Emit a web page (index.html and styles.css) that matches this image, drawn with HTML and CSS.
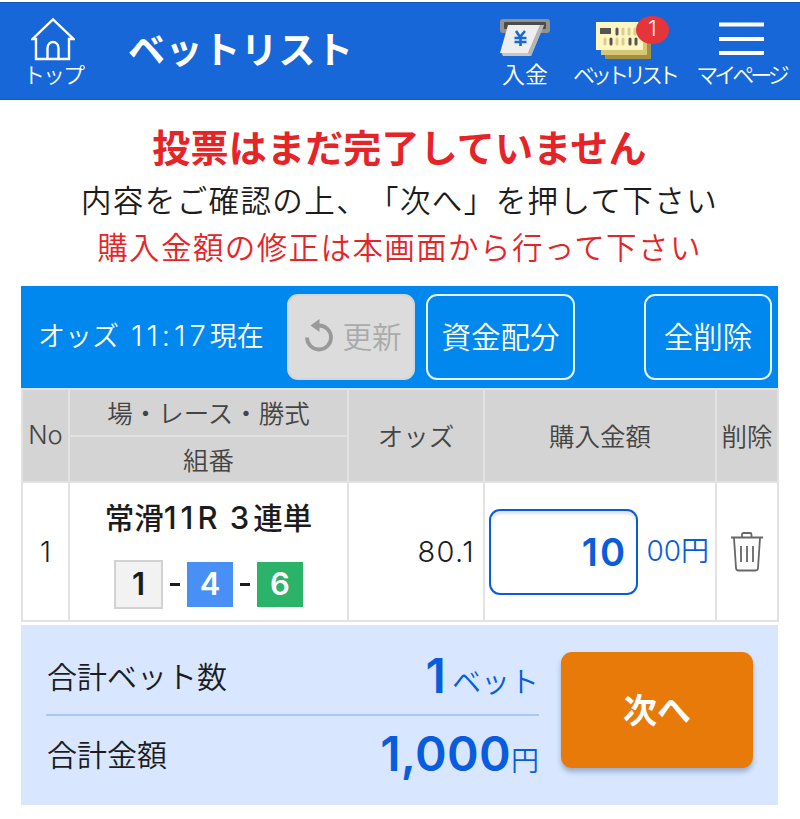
FILE: index.html
```html
<!DOCTYPE html>
<html lang="ja">
<head>
    <meta charset="UTF-8">
    <meta name="viewport" content="width=device-width, initial-scale=1.0">
    <title>ベットリスト</title>
    <link rel="stylesheet" href="styles.css">
</head>
<body>
    <header class="header">
        <a class="nav-item nav-top">
            <svg class="nav-icon" width="44" height="44" viewBox="0 0 44 44" fill="none" stroke="#fff" stroke-width="2.4">
                <path d="M1.5 22 22 2.5 42.5 22H38V42H5V22Z"/>
                <path d="M16.5 42V31a5.500 6 0 0 1 11 0V42"/>
            </svg>
            <span>トップ</span>
        </a>
        <h1>ベットリスト</h1>
        <a class="nav-item nav-deposit">
            <svg class="nav-icon" width="50" height="44" viewBox="0 0 50 44">
                <rect x="0" y="2" width="50" height="14" rx="3" fill="#929292"/>
                <rect x="4" y="5" width="42" height="7" rx="1" fill="#4b4b4b"/>
                <path d="M10 8H44L31 39H3L1 35Z" fill="#c9c6bd"/>
                <path d="M8 8H40L28 36H0Z" fill="#eeeeee"/>
                <path d="M40 8h4L31 39l-3-3Z" fill="#b5b5b5"/>
                <path d="M16 14l4 6 5-6M20.500 20v9M14.500 21h12M14.500 25h12" fill="none" stroke="#1767d9" stroke-width="2.600"/>
            </svg>
            <span>入金</span>
        </a>
        <a class="nav-item nav-betlist">
            <svg class="nav-icon" width="56" height="44" viewBox="0 0 56 44">
                <path d="M9 10H55V42H9Z" fill="#a3913f"/>
                <path d="M5 8H51V38H5Z" fill="#d6c676"/>
                <path d="M0 5H47V33H0Z" fill="#fff6c2"/>
                <path d="M4 11h11v6H4Z" fill="#555"/>
                <g stroke-width="3" stroke-linecap="round">
                    <path d="M21 12v5M15 22v5M34 22v5M40 22v5" stroke="#555"/>
                    <path d="M27 12v5M33 12v5M39 12v5M9 22v5M21 22v5M27 22v5" stroke="#d9cd92"/>
                </g>
            </svg>
            <span class="badge num">1</span>
            <span>ベットリスト</span>
        </a>
        <a class="nav-item nav-mypage">
            <svg class="nav-icon" width="46" height="44" viewBox="0 0 46 44" stroke="#fff" stroke-width="3.800">
                <path d="M1 7.500H46M1 22H46M1 36H46"/>
            </svg>
            <span>マイページ</span>
        </a>
    </header>

    <section class="notice">
        <p class="notice-title">投票はまだ完了していません</p>
        <p>内容をご確認の上、「次へ」を押して下さい</p>
        <p class="notice-red">購入金額の修正は本画面から行って下さい</p>
    </section>

    <main class="bet-container">
        <div class="toolbar">
            <span class="odds-time">オッズ <span class="num">11:17</span>現在</span>
            <button type="button" class="tool-button refresh-button" disabled>
                <svg width="30" height="34" viewBox="0 0 30 34">
                    <path d="M3 19.500A12 12 0 1 0 15 7.500" fill="none" stroke="#999" stroke-width="3.800"/>
                    <path d="M6.500 7.500 15.500 1V14Z" fill="#999"/>
                </svg>
                更新
            </button>
            <button type="button" class="tool-button fund-button">資金配分</button>
            <button type="button" class="tool-button clear-button">全削除</button>
        </div>

        <table class="bet-table">
            <colgroup>
                <col class="col-no">
                <col class="col-race">
                <col class="col-odds">
                <col class="col-amount">
                <col class="col-delete">
            </colgroup>
            <thead>
                <tr>
                    <th rowspan="2" class="num">No</th>
                    <th>場・レース・勝式</th>
                    <th rowspan="2">オッズ</th>
                    <th rowspan="2">購入金額</th>
                    <th rowspan="2">削除</th>
                </tr>
                <tr>
                    <th class="combo-head">組番</th>
                </tr>
            </thead>
            <tbody>
                <tr>
                    <td class="num">1</td>
                    <td>
                        <div class="race-name">常滑<span class="num">11R 3</span>連単</div>
                        <div class="combo num">
                            <span class="boat boat-1">1</span>
                            <i class="dash"></i>
                            <span class="boat boat-4">4</span>
                            <i class="dash"></i>
                            <span class="boat boat-6">6</span>
                        </div>
                    </td>
                    <td class="odds num">80.1</td>
                    <td>
                        <div class="amount">
                            <input type="text" class="amount-input num" value="10">
                            <span><span class="num">00</span>円</span>
                        </div>
                    </td>
                    <td>
                        <svg class="trash" width="34" height="42" viewBox="0 0 34 42" fill="none" stroke="#666" stroke-width="1.800">
                            <path d="M1 6.500H33M12 6V3.500Q12 2 13.500 2H20Q21.500 2 21.500 3.500V6"/>
                            <path d="M4 7 6 37Q6.200 39.500 8.500 39.500H25.500Q27.800 39.500 28 37L30 7"/>
                            <path d="M11 15V31M17 15V31M23 15V31"/>
                        </svg>
                    </td>
                </tr>
            </tbody>
        </table>

        <div class="summary">
            <div class="totals">
                <div class="total-row">
                    <span>合計ベット数</span>
                    <span class="total-value total-bets"><b class="num">1</b>ベット</span>
                </div>
                <div class="total-row">
                    <span>合計金額</span>
                    <span class="total-value"><b class="num">1,000</b>円</span>
                </div>
            </div>
            <button type="button" class="next-button">次へ</button>
        </div>
    </main>
</body>
</html>
```
FILE: styles.css
```css
* {
    box-sizing: border-box;
}

body {
    margin: 0;
    background-color: #fff;
    color: #1c1c1c;
    font-family: "Noto Sans CJK JP", sans-serif;
    font-weight: 350;
    text-spacing-trim: space-all;
}

button, input {
    font-family: inherit;
    margin: 0;
    padding: 0;
}

.num {
    font-family: Inter, "Noto Sans CJK JP", sans-serif;
}

.header {
    display: flex;
    height: 98px;
    margin-top: 2px;
    background-color: #1767d9;
    border-top: 1px solid #0d57bf;
    border-bottom: 1px solid #0d57bf;
    color: #fff;
}

.nav-item {
    position: relative;
    display: flex;
    flex-direction: column;
    align-items: center;
    padding-top: 14px;
    font-size: 22px;
    line-height: 24px;
    white-space: nowrap;
}

.nav-top {
    width: 106px;
    letter-spacing: -2px;
}

.header h1 {
    flex: 1;
    margin: 0;
    padding-left: 22px;
    font-size: 37px;
    font-weight: 700;
    line-height: 91px;
    letter-spacing: 0.6px;
}

.nav-deposit {
    width: 86px;
    font-size: 23px;
}

.nav-betlist {
    width: 112px;
    letter-spacing: -5px;
}

.nav-mypage {
    width: 120px;
    padding-left: 2px;
    letter-spacing: -4px;
}

.badge {
    position: absolute;
    top: 13px;
    left: 68px;
    width: 33px;
    height: 28px;
    border-radius: 50%;
    background-color: #e6353a;
    font-size: 21px;
    line-height: 25px;
    letter-spacing: 0;
    text-align: center;
}

.notice {
    height: 186px;
    padding-top: 18px;
    text-align: center;
}

.notice p {
    margin: 0 1px 0 0;
    font-size: 30.5px;
    line-height: 47px;
    letter-spacing: 1.4px;
}

.notice .notice-title {
    margin-bottom: 3px;
    color: #e62428;
    font-size: 38px;
    font-weight: 700;
    line-height: 55px;
    letter-spacing: 0.2px;
}

.notice .notice-red {
    color: #e62428;
}

.bet-container {
    width: 757px;
    margin-left: 21px;
}

.toolbar {
    display: flex;
    height: 102px;
    padding: 8px 6px 8px 17px;
    background-color: #0088ee;
    color: #fff;
}

.odds-time {
    width: 249px;
    font-size: 27px;
    line-height: 81px;
    white-space: nowrap;
}

.odds-time .num {
    margin-left: 6px;
    font-size: 29px;
    letter-spacing: 4px;
}

.tool-button {
    height: 86px;
    padding-bottom: 4px;
    border: 2px solid #e6f4ff;
    border-radius: 11px;
    background-color: transparent;
    color: #fff;
    font-size: 29.5px;
    font-weight: 350;
}

.refresh-button {
    display: flex;
    align-items: center;
    justify-content: center;
    gap: 8px;
    width: 128px;
    padding-left: 4px;
    border-color: #d2d6da;
    background-color: #dcdcdc;
    color: #aaa;
}

.fund-button {
    width: 149px;
    margin-left: 11px;
}

.clear-button {
    width: 128px;
    margin-left: auto;
}

.bet-table {
    width: 757px;
    table-layout: fixed;
    border-collapse: collapse;
    text-align: center;
}

.col-no {
    width: 47px;
}

.col-race {
    width: 279px;
}

.col-odds {
    width: 136px;
}

.col-amount {
    width: 232px;
}

.col-delete {
    width: 62px;
}

.bet-table th, .bet-table td {
    padding: 0;
    border: 2px solid #e2e2e2;
}

.bet-table th {
    height: 47px;
    padding-bottom: 1px;
    background-color: #d4d4d4;
    color: #444;
    font-size: 25.5px;
    font-weight: 350;
    line-height: 30px;
    white-space: nowrap;
}

.bet-table .combo-head {
    height: 46px;
}

.bet-table td {
    height: 139px;
    font-size: 28px;
}

.race-name {
    font-size: 29.5px;
    font-weight: 500;
    line-height: 40px;
    margin: 2px 0 22px;
}

.race-name .num {
    font-size: 31px;
    letter-spacing: 4px;
    word-spacing: -4px;
}

.combo {
    display: flex;
    align-items: center;
    justify-content: center;
    font-weight: 600;
}

.boat {
    width: 46px;
    height: 45px;
    color: #fff;
    font-size: 31px;
    line-height: 43px;
}

.boat-1 {
    width: 49px;
    height: 49px;
    border: 2px solid #d2d2d2;
    background-color: #f2f2f2;
    color: #1c1c1c;
}

.boat-4 {
    background-color: #488ff6;
}

.boat-6 {
    background-color: #2bb36a;
}

.dash {
    width: 10px;
    height: 3px;
    margin: 0 7px;
    background-color: #1c1c1c;
}

.bet-table .odds {
    padding-right: 8px;
    font-size: 29px;
    text-align: right;
    letter-spacing: 1.4px;
}

.amount {
    display: flex;
    align-items: center;
    justify-content: space-between;
    padding: 0 6px 0 4px;
    color: #075ddd;
}

.amount > span {
    padding-bottom: 6px;
}

.amount-input {
    width: 149px;
    height: 86px;
    padding-right: 9px;
    border: 2px solid #075ddd;
    border-radius: 11px;
    box-shadow: inset 0 4px 3px -1px #e2e2e2;
    color: #075ddd;
    font-size: 38px;
    font-weight: 600;
    letter-spacing: 2px;
    text-align: right;
}

.trash {
    display: block;
    margin: 0 auto;
}

.summary {
    display: flex;
    height: 180px;
    margin-top: 3px;
    padding: 27px 25px 0;
    background-color: #d8e7ff;
}

.totals {
    width: 493px;
}

.total-row {
    display: flex;
    align-items: flex-start;
    justify-content: space-between;
    height: 62px;
    padding-left: 1px;
    font-size: 30px;
    line-height: 47px;
}

.total-row + .total-row {
    height: 78px;
    padding-top: 14px;
    border-top: 2px solid #a9c8f7;
}

.total-value {
    color: #075ddd;
    font-size: 28px;
}

.total-value b {
    font-size: 48px;
    font-weight: 600;
    letter-spacing: 0.3px;
}

.total-bets {
    font-size: 29px;
}

.total-bets b {
    margin-right: 6px;
}

.next-button {
    width: 192px;
    height: 116px;
    padding-bottom: 3px;
    margin-left: 22px;
    border: none;
    border-radius: 11px;
    background-color: #e87a09;
    box-shadow: 0 4px 5px rgba(60, 90, 130, 0.4);
    color: #fff;
    font-size: 34px;
    font-weight: 700;
}
```
